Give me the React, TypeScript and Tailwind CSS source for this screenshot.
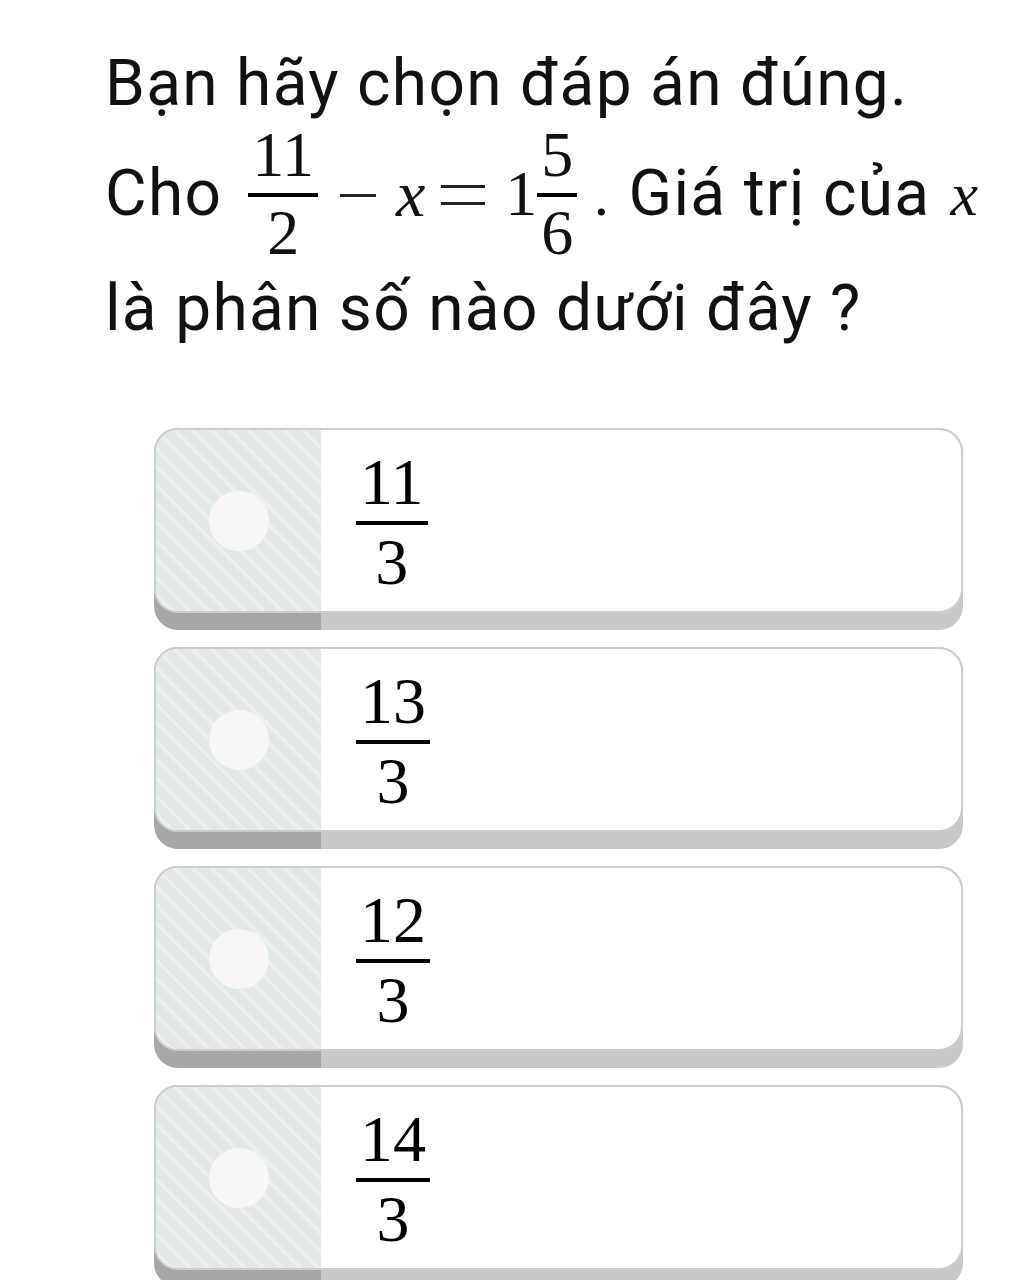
import React from 'react';

const serif = { fontFamily: '"Liberation Serif", "DejaVu Serif", serif' };

const Frac: React.FC<{ num: string; den: string; size?: string }> = ({ num, den, size = 'text-[66px]' }) => (
  <span className={`inline-flex shrink-0 flex-col items-center align-middle leading-none ${size}`} style={serif}>
    <span className="px-1 pb-[6px]">{num}</span>
    <span className="w-full h-[4px] bg-black" />
    <span className="px-1 pt-[4px]">{den}</span>
  </span>
);

const options = [
  { num: '11', den: '3' },
  { num: '13', den: '3' },
  { num: '12', den: '3' },
  { num: '14', den: '3' },
];

const OptionCard: React.FC<{ num: string; den: string }> = ({ num, den }) => (
  <div className="rounded-[24px] pb-[17px] bg-[linear-gradient(to_right,#a6a8a7_167px,#c9c9c9_167px)]">
    <div className="h-[185px] flex rounded-[24px] overflow-hidden border-2 border-[#cdcdcd] bg-white">
      <div className="w-[165px] shrink-0 flex items-center justify-center bg-[repeating-linear-gradient(45deg,#e2e7e7_0px,#e2e7e7_9px,#ecefef_9px,#ecefef_13px)]">
        <div className="w-[60px] h-[60px] rounded-full bg-[#f7f8f6]" />
      </div>
      <div className="flex-1 flex items-center pl-[35px] pt-[2px] text-black">
        <Frac num={num} den={den} />
      </div>
    </div>
  </div>
);

export default function App() {
  return (
    <div className="w-[1024px] h-[1280px] bg-white overflow-hidden" style={{ fontFamily: 'Roboto, "Noto Sans", sans-serif' }}>
      <div className="pl-[105px] pt-[44px] text-[#111] text-[64px] tracking-[1.3px]">
        <div className="leading-[80px]">Bạn hãy chọn đáp án đúng.</div>
        <div className="flex items-center h-[140px] whitespace-nowrap">
          <span className="shrink-0">Cho</span>
          <span className="ml-[26px] shrink-0 inline-flex items-center tracking-normal" style={serif}>
            <Frac num="11" den="2" size="text-[64px]" />
            <span className="shrink-0 ml-[22px] mr-[20px] mt-[2px] h-[3px] w-[36px] bg-[#222]" />
            <span className="shrink-0 text-[66px] italic leading-none">x</span>
            <span className="shrink-0 ml-[16px] mr-[20px] mt-[2px] flex flex-col gap-[14px] w-[44px]">
              <span className="h-[3px] bg-[#222]" />
              <span className="h-[3px] bg-[#222]" />
            </span>
            <span className="shrink-0 text-[64px] leading-none">1</span>
            <Frac num="5" den="6" size="text-[64px]" />
          </span>
          <span className="shrink-0 ml-[16px]">. Giá trị của</span>
          <span className="shrink-0 ml-[20px] italic text-[62px] tracking-normal" style={serif}>x</span>
        </div>
        <div className="leading-[90px]">là phân số nào dưới đây ?</div>
      </div>
      <div className="ml-[154px] mr-[61px] mt-[74px] flex flex-col gap-[17px]">
        {options.map((o) => (
          <OptionCard key={o.num} num={o.num} den={o.den} />
        ))}
      </div>
    </div>
  );
}
